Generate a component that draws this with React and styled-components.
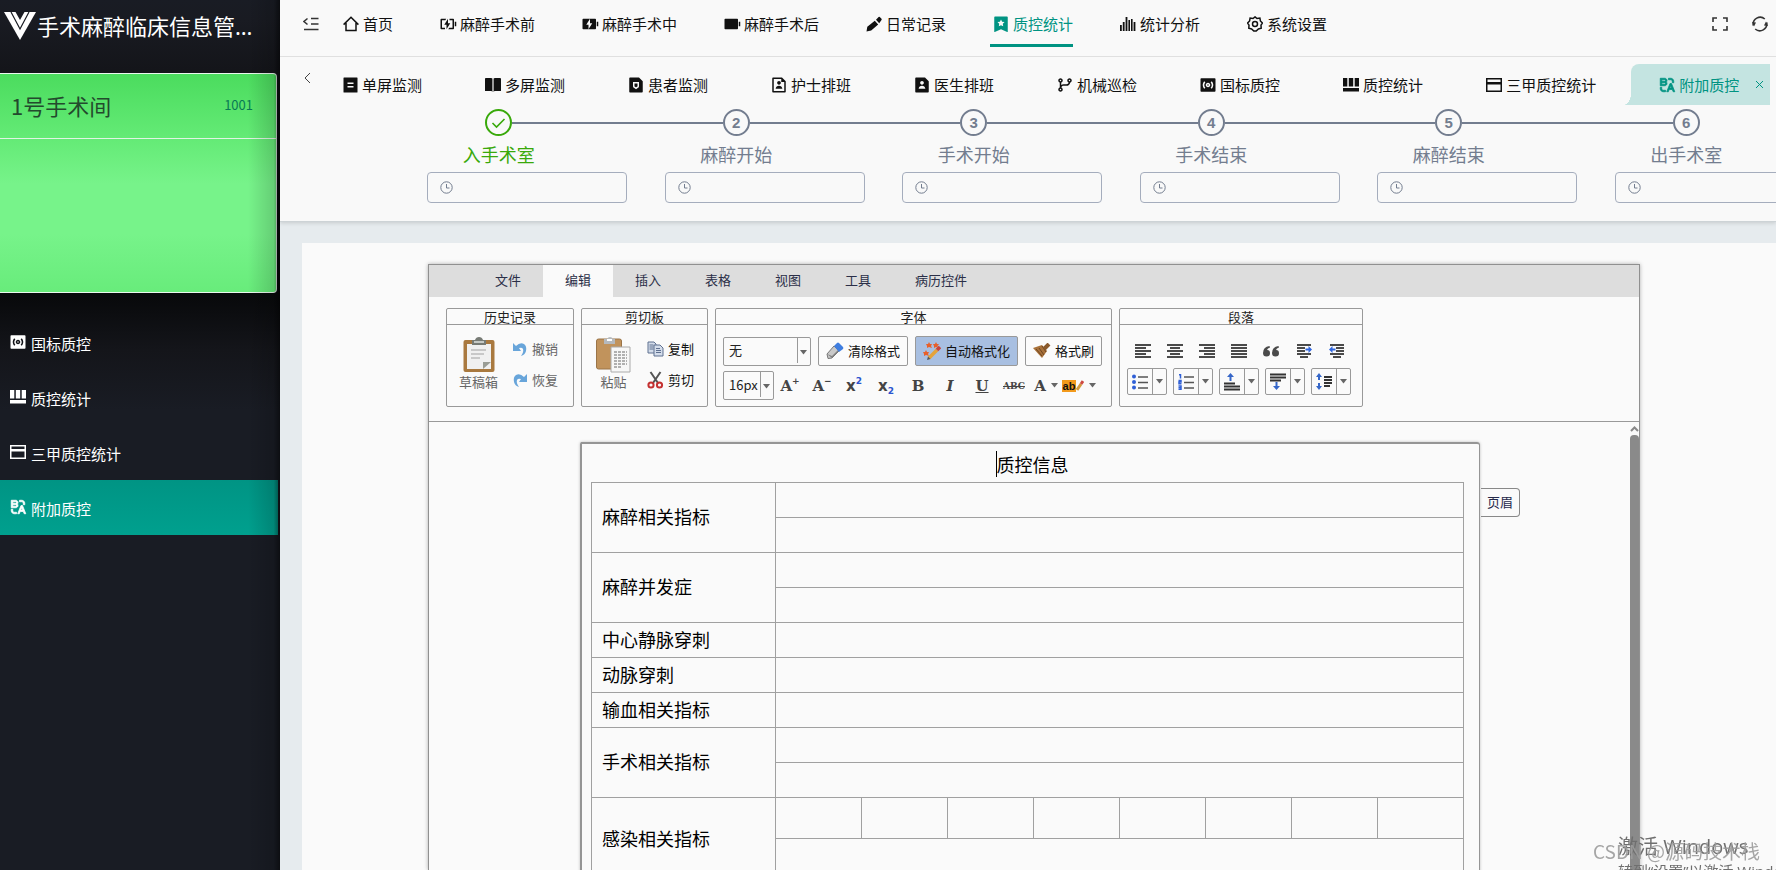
import React from 'react';
import styled, { createGlobalStyle } from 'styled-components';
import {
  RiAB,
  RiBatteryChargeFill,
  RiBatteryChargeLine,
  RiBatteryFill,
  RiBookmark3Fill,
  RiFileShieldFill,
  RiFileUserFill,
  RiFileUserLine,
  RiGitBranchLine,
  RiSurroundSoundFill
} from 'react-icons/ri';

const GlobalStyle = createGlobalStyle`
  * {
    box-sizing: border-box;
  }

  body {
    margin: 0;
    overflow: hidden;
    background: #f9f9f9;
    color: #111;
    font-family: "Noto Sans CJK SC", "Liberation Sans", sans-serif;
    font-size: 15px;
    line-height: 20px;
  }

  button, input, select {
    font: inherit;
    color: inherit;
  }

  button {
    background: none;
    border: 0;
    padding: 0;
    cursor: pointer;
    white-space: nowrap;
  }

  a {
    color: inherit;
    text-decoration: none;
    white-space: nowrap;
  }

  svg {
    display: block;
    flex: none;
  }
`;

const Layout = styled.div`
  display: flex;
  height: 100vh;
`;

const IconSlot = styled.span`
  display: flex;
  align-items: center;
  justify-content: center;
  flex: none;
  width: 16px;
  height: 18px;
`;

/* ---------- sidebar ---------- */

const Sidebar = styled.aside`
  position: relative;
  flex: 0 0 280px;
  min-width: 0;
  display: flex;
  flex-direction: column;
  padding-right: 2px;
  background: linear-gradient(#191c24 0, #191b22 20px, #14151a 70px, #08090b 295px, #14151a 350px, #191c24 410px);
  color: #fff;

  &::after {
    content: '';
    position: absolute;
    inset: 0 0 0 auto;
    width: 32px;
    background: linear-gradient(90deg, rgba(0, 0, 0, 0), rgba(0, 0, 0, 0.15) 80%, rgba(0, 0, 0, 0.5));
    pointer-events: none;
  }
`;

const Brand = styled.div`
  display: flex;
  align-items: center;
  gap: 1px;
  height: 54px;
  margin-bottom: 19px;
  padding: 0 16px 2px 4px;
`;

const BrandName = styled.h1`
  min-width: 0;
  margin: 0;
  overflow: hidden;
  font-family: "Noto Sans", "Noto Sans CJK SC", sans-serif;
  font-size: 22px;
  font-weight: 400;
  line-height: 32px;
  text-overflow: ellipsis;
  white-space: nowrap;
`;

const RoomCard = styled.section`
  height: 220px;
  margin-bottom: 22px;
  margin-right: 1px;
  border: 1px solid #e9f8ee;
  border-left: 0;
  border-radius: 0 4px 4px 0;
  background: linear-gradient(#4bdc5e, #63ea75 62px, #77f38a 110px, #77f38a 160px, #68ec7b);
`;

const RoomHeader = styled.div`
  display: flex;
  align-items: center;
  justify-content: space-between;
  height: 65px;
  padding: 0 23px 3px 11px;
  border-bottom: 1px solid #e0f3e4;
`;

const RoomName = styled.h2`
  margin: 0;
  color: #234a2d;
  font-size: 22px;
  font-weight: 400;
  line-height: 32px;
`;

const RoomCode = styled.span`
  color: #087a55;
  font-size: 13px;
`;

const SideLink = styled.a`
  display: flex;
  align-items: center;
  gap: 5px;
  height: 55px;
  padding: 2px 10px 0;
  background: ${props => (props.$active ? 'linear-gradient(#009484, #00a08e)' : 'none')};

  ${IconSlot} {
    margin-bottom: 4px;
  }
`;

/* ---------- header ---------- */

const Main = styled.main`
  flex: 1;
  min-width: 0;
  display: flex;
  flex-direction: column;
  background: #e6ebee;
`;

const Header = styled.header`
  position: relative;
  height: 222px;
  overflow: hidden;
  background: #f9f9f9;
  border-bottom: 1px solid #cdd3d6;
  box-shadow: 0 1px 4px rgba(0, 0, 0, 0.14);
`;

const TopBar = styled.div`
  display: flex;
  align-items: center;
  height: 57px;
  padding: 0 8px 9px 23px;
  border-bottom: 1px solid #e0e0e0;
`;

const IconButton = styled.button`
  display: flex;
  align-items: center;
  justify-content: center;
  color: ${props => (props.$plain ? 'inherit' : '#333')};
`;

const TopNav = styled.nav`
  display: flex;
  flex: 1;
  gap: 47px;
  padding-left: 24px;
`;

const TopLink = styled.a`
  position: relative;
  display: flex;
  align-items: center;
  gap: 4px;
  color: ${props => (props.$active ? '#009382' : '#111')};

  &::after {
    content: '';
    display: ${props => (props.$active ? 'block' : 'none')};
    position: absolute;
    inset: auto 0 -13px -3px;
    height: 3px;
    background: #009382;
  }
`;

const Tools = styled.div`
  display: flex;
  gap: 24px;
`;

const TabBar = styled.nav`
  display: flex;
  align-items: center;
  height: 41px;
  margin-top: 7px;
  padding-left: 24px;
  white-space: nowrap;
`;

const ScrollLeft = styled(IconButton)`
  width: 7px;
  margin: 0 31px 14px 0;
`;

const TabLink = styled.a`
  display: flex;
  align-items: center;
  gap: 4px;
  margin-right: 63px;
`;

const ActiveTab = styled.div`
  position: relative;
  display: flex;
  align-items: center;
  height: 41px;
  margin-left: -28px;
  padding-left: 28px;
  padding-right: 6px;
  border-radius: 8px 0 0 0;
  background: #c4e4e1;
  color: #009382;

  ${TabLink} {
    margin-right: 16px;
  }

  &::before {
    content: '';
    position: absolute;
    left: -8px;
    bottom: 0;
    width: 8px;
    height: 12px;
    background: radial-gradient(ellipse at 0 0, transparent 70%, #c4e4e1 72%);
  }
`;

const Steps = styled.ol`
  display: grid;
  grid-template-columns: repeat(6, 1fr);
  width: calc(100% - 71px);
  margin: 4px 0 0 100px;
  padding: 0;
  list-style: none;
`;

const Step = styled.li`
  display: flex;
  flex-direction: column;
  align-items: center;
  color: ${props => (props.$done ? '#39a90b' : '#737d8f')};
`;

const StepTrack = styled.div`
  display: flex;
  align-items: center;
  align-self: stretch;

  &::before,
  &::after {
    content: '';
    flex: 1;
    height: 2px;
    background: #737d8f;
  }

  ${Step}:first-child &::before,
  ${Step}:last-child &::after {
    background: none;
  }
`;

const StepCircle = styled.span`
  display: flex;
  align-items: center;
  justify-content: center;
  width: 27px;
  height: 27px;
  border: 2px solid currentColor;
  border-radius: 50%;
  font: bold 15px/20px "Liberation Sans", sans-serif;
`;

const StepLabel = styled.label`
  margin: 5px 0;
  font-size: 18px;
  line-height: 26px;
`;

const TimeField = styled.div`
  display: flex;
  align-items: center;
  align-self: flex-start;
  gap: 8px;
  width: 200px;
  height: 31px;
  margin-left: 47px;
  margin-right: -10px;
  padding: 0 12px;
  border: 1px solid #a5adbd;
  border-radius: 4px;
  color: #737d8f;

  input {
    flex: 1;
    min-width: 0;
    border: 0;
    outline: 0;
    background: none;
  }
`;

/* ---------- editor ---------- */

const Content = styled.div`
  flex: 1;
  min-height: 0;
  margin: 21px 0 0 22px;
  padding: 21px 136px 0 126px;
  background: #fafafa;
`;

const Editor = styled.section`
  display: flex;
  flex-direction: column;
  height: 100%;
  border: 1px solid #909090;
  border-bottom: 0;
  box-shadow: 0 0 4px rgba(0, 0, 0, 0.3);
  color: #222;
  font-size: 13px;
`;

const RibbonTabs = styled.div`
  display: flex;
  padding-left: 44px;
  background: #ddd;
`;

const RibbonTab = styled.button`
  height: 32px;
  padding: 0 22px 2px;
  background: ${props => (props.$active ? '#fafafa' : 'none')};
  color: #2b2f48;
`;

const Ribbon = styled.div`
  display: flex;
  gap: 7px;
  padding: 11px 17px 14px;
  border-bottom: 1px solid #999;
`;

const GroupBox = styled.fieldset`
  flex: 0 0 ${props => props.$width}px;
  height: 99px;
  min-width: 0;
  margin: 0;
  padding: 0;
  border: 1px solid #999;
  border-radius: 2px;
`;

const GroupTitle = styled.div`
  height: 16px;
  border-bottom: 1px solid #999;
  line-height: 15px;
  text-align: center;
`;

const GroupBody = styled.div`
  display: flex;
  gap: ${props => props.$gap}px;
  padding: 12px ${props => props.$side}px 0;
`;

const BigButton = styled.button`
  display: flex;
  flex-direction: column;
  align-items: center;
  color: #666;
  line-height: 18px;
`;

const ButtonStack = styled.div`
  display: flex;
  flex-direction: column;
  gap: 11px;
  padding-top: 2px;
`;

const SmallButton = styled.button`
  display: flex;
  align-items: center;
  gap: 4px;
  color: ${props => (props.$dark ? '#111' : '#666')};
`;

const ToolRows = styled.div`
  display: flex;
  flex-direction: column;
  gap: 5px;
  padding: ${props => props.$top}px 7px 0;
`;

const ToolRow = styled.div`
  display: flex;
  align-items: center;
  gap: ${props => props.$gap || 0}px;
`;

const SelectBox = styled.label`
  position: relative;
  display: block;
  width: ${props => props.$width}px;
  height: 29px;
  border: 1px solid #999;
  border-radius: 2px;

  select {
    width: 100%;
    height: 100%;
    padding: 0 0 2px 5px;
    border: 0;
    outline: 0;
    background: none;
    appearance: none;
  }

  svg {
    position: absolute;
    right: 3px;
    top: 12px;
    pointer-events: none;
  }

  &::after {
    content: '';
    position: absolute;
    inset: 0 12px 2px auto;
    width: 1px;
    background: #999;
  }
`;

const FormatButton = styled.button`
  display: flex;
  align-items: center;
  justify-content: center;
  gap: 4px;
  width: ${props => props.$width}px;
  height: 30px;
  border: 1px solid #999;
  border-radius: 2px;
  background: ${props => (props.$active ? '#a8bfe1' : '#fbfbfb')};
  color: #111;
`;

const Glyph = styled.button`
  display: flex;
  align-items: center;
  justify-content: center;
  gap: 5px;
  width: ${props => props.$width || 32}px;
  height: 24px;
  color: #444;
  font: bold 15px/20px "DejaVu Serif", serif;
`;

const ScriptGlyph = styled(Glyph)`
  gap: 0;
  font-family: ${props => (props.$blue ? '"DejaVu Sans", sans-serif' : '"DejaVu Serif", serif')};

  sup, sub {
    font: bold 9px/10px "DejaVu Sans", sans-serif;
    color: ${props => (props.$blue ? '#2a55cf' : '#444')};
  }

  sup {
    align-self: flex-start;
    padding-top: 2px;
  }

  sub {
    align-self: flex-end;
    padding-bottom: 2px;
  }
`;

const Struck = styled.s`
  font-size: 9px;
`;

const Highlight = styled.span`
  padding: 0 1px;
  background: #f29a1c;
  color: #111;
  font: bold 11px/12px "Liberation Sans", sans-serif;
`;

const SplitButton = styled.button`
  display: flex;
  align-items: center;
  width: 40px;
  height: 27px;
  border: 1px solid #999;
  border-radius: 2px;

  > svg:first-child {
    margin: 0 4px;
  }
`;

const SplitCaret = styled.span`
  display: flex;
  flex: 1;
  align-items: center;
  justify-content: center;
  align-self: stretch;
  border-left: 1px solid #999;
`;

const DocumentArea = styled.div`
  position: relative;
  flex: 1;
  min-height: 0;
  overflow: hidden;
  padding: 20px 159px 0 151px;
`;

const PageRow = styled.div`
  display: flex;
  align-items: flex-start;
  margin-right: -40px;
`;

const Page = styled.article`
  flex: 1;
  padding: 7px 15px 0 9px;
  border: solid #959595;
  border-width: 2px 1px 0 2px;
  border-radius: 2px 3px 0 0;
  box-shadow: 0 0 3px rgba(0, 0, 0, 0.25);
  color: #000;
  font-size: 18px;
`;

const PageTitle = styled.h2`
  width: max-content;
  margin: 0 0 5px calc(50% - 32px);
  border-left: 1px solid #000;
  font-size: 18px;
  font-weight: 400;
  line-height: 26px;
`;

const HeaderTag = styled.button`
  width: 39px;
  height: 29px;
  margin: 46px 0 0 1px;
  padding-bottom: 2px;
  border: 1px solid #888;
  border-left: 0;
  border-radius: 0 4px 4px 0;
  color: #25294a;
`;

const Scrollbar = styled.div`
  position: absolute;
  inset: 4px 0 0 auto;
  width: 9px;
  color: #888;

  &::after {
    content: '';
    position: absolute;
    inset: 9px 0 0;
    border-radius: 4px 4px 0 0;
    background: #8a8a8a;
  }
`;

const DataTable = styled.table`
  width: 100%;
  border-collapse: collapse;
  table-layout: fixed;

  th, td {
    height: 35px;
    padding: 0;
    border: 1px solid #a0a0a0;
  }

  th {
    padding: 0 0 3px 10px;
    font-weight: 400;
    line-height: 26px;
    text-align: left;
  }
`;

const LabelColumn = styled.col`
  width: 21.1%;
`;

const CellRow = styled.tr`
  && td {
    height: ${props => props.$height}px;
  }
`;

const Watermark = styled.div`
  position: fixed;
  color: rgba(155, 155, 155, 0.9);
  font-size: 19px;
  line-height: 26px;
  white-space: nowrap;
  pointer-events: none;
  right: 16px;
  bottom: 6px;
`;

const Activation = styled(Watermark)`
  right: auto;
  bottom: -12px;
  left: calc(100% - 158px);
  color: #6f6f6f;
  font-family: "Open Sans", "Noto Sans CJK SC", sans-serif;
  font-size: 15px;
  line-height: 22px;

  strong {
    display: block;
    font-size: 20px;
    font-weight: 400;
    line-height: 26px;
  }
`;

/* ---------- icons ---------- */

const HomeIcon = () => (
  <svg width="16" height="16" viewBox="0 0 16 16" fill="none" stroke="currentColor" strokeWidth="1.5">
    <path d="M.6 8.600L8 1.200l7.400 7.400M3 7v7.500h10V7" />
  </svg>
);

const PencilIcon = () => (
  <svg width="16" height="16" viewBox="0 0 16 16">
    <path fill="currentColor" d="M.5 15.500l.8-4.800 7.500-6 3.400 3.800-7 6zM10 3.700L12.600 1q.6-.5 1.200 0l1.700 1.700q.5.600 0 1.200l-2.300 3.300z" />
  </svg>
);

const GearIcon = () => (
  <svg width="16" height="16" viewBox="0 0 16 16" fill="none" stroke="currentColor" strokeWidth="1.500">
    <path d="M8 .9l2 1.600 2.900-.4.500 2.800 2 2.100-1.400 2.200.200 3-2.800.700L9.200 15H6.800l-2.200-2.100-2.800-.7.200-3L.6 7l2-2.100.5-2.800L6 2.500z" />
    <circle cx="8" cy="8" r="2.500" />
  </svg>
);

const SingleScreenIcon = () => (
  <svg width="15" height="16" viewBox="0 0 15 16">
    <path fill="currentColor" fillRule="evenodd" d="M1 .5h13q.5 0 .5.500v14q0 .5-.5.500H1q-.5 0-.5-.5V1q0-.5.500-.5zm3.500 5V7h6V5.500zm0 3.500v1.500h6V9z" />
  </svg>
);

const MultiScreenIcon = () => (
  <svg width="16" height="16" viewBox="0 0 16 16">
    <path fill="currentColor" d="M0 1.500Q0 1 1 1h5q1 0 1.400.6V15L6.500 14H0zM8.600 1.600Q9 1 10 1h5q1 0 1 1v12H9.500l-.9 1z" />
  </svg>
);

const ColumnsIcon = () => (
  <svg width="16" height="16" viewBox="0 0 16 16">
    <path fill="currentColor" d="M0 1h4.300v8.500H0zM5.800 1h4.400v8.500H5.800zM11.700 1H16v8.500h-4.300zM0 11h16v3.500H0z" />
  </svg>
);

const WindowIcon = () => (
  <svg width="16" height="16" viewBox="0 0 16 16">
    <path fill="currentColor" fillRule="evenodd" d="M0 1h16v14H0zm1.500 1.500v2.500h13V2.500zm0 5v6h13v-6z" />
  </svg>
);

const BarsIcon = () => (
  <svg width="16" height="16" viewBox="0 0 16 16">
    <path fill="currentColor" d="M0 9h1.800v6H0zM2.800 6h1.800v9H2.800zM5.600 1h1.800v14H5.600zM8.400 4h1.600v11H8.400zM11 3h1.600v12H11zM13.600 6h1.800v9h-1.800z" />
  </svg>
);

const ExchangeIcon = () => <RiAB size={18} strokeWidth="1" />;

const CollapseIcon = () => (
  <svg width="16" height="14" viewBox="0 0 16 14" fill="none" stroke="#333" strokeWidth="1.500">
    <path d="M8 1.500h7.500M8 7h7.500M1 12.500h14.500M4.500 1.500L1 4.500l3.500 3" />
  </svg>
);

const FullscreenIcon = () => (
  <svg width="16" height="16" viewBox="0 0 16 16" fill="none" stroke="currentColor" strokeWidth="1.600">
    <path d="M1 6V2h4M11 2h4v4M15 10v4h-4M5 14H1v-4" />
  </svg>
);

const RefreshIcon = () => (
  <svg width="16" height="16" viewBox="0 0 16 16" fill="none" stroke="currentColor" strokeWidth="1.600">
    <path d="M12.800 3A7 7 0 0 0 1.300 9.500M3.200 13A7 7 0 0 0 14.700 6.500" />
    <path fill="currentColor" stroke="none" d="M0 6l4 .5-2 4zM16 10l-4-.5 2-4z" />
  </svg>
);

const ChevronLeftIcon = () => (
  <svg width="7" height="12" viewBox="0 0 7 12" fill="none" stroke="#444">
    <path d="M6 1L1 6l5 5" />
  </svg>
);

const ClockIcon = () => (
  <svg width="13" height="13" viewBox="0 0 13 13" fill="none" stroke="currentColor">
    <circle cx="6.500" cy="6.500" r="5.700" />
    <path d="M6.500 3v4h3" />
  </svg>
);

const CheckIcon = () => (
  <svg width="15" height="12" viewBox="0 0 15 12" fill="none" stroke="currentColor" strokeWidth="1.600">
    <path d="M1.500 6l4 4L13.500 2" />
  </svg>
);

const CloseIcon = () => (
  <svg width="9" height="9" viewBox="0 0 9 9" stroke="currentColor">
    <path d="M1 1l7 7M8 1L1 8" />
  </svg>
);

const LogoIcon = () => (
  <svg width="32" height="28" viewBox="0 0 32 28">
    <path fill="#fff" d="M0 0h32L16 28z" />
    <path fill="none" stroke="#191b22" strokeWidth="1.200" d="M7 0l9 17L25 0" />
    <path fill="#191b22" d="M11.500 0L16 8 20.500 0z" />
  </svg>
);

const Caret = () => (
  <svg width="7" height="5" viewBox="0 0 7 5">
    <path fill="#666" d="M0 0h7L3.500 4.500z" />
  </svg>
);

const DraftIcon = () => (
  <svg width="32" height="36" viewBox="0 0 32 36">
    <rect x="0.500" y="3" width="31" height="32" rx="2" fill="#a9793f" />
    <path fill="#f0f0f0" d="M4 7h24v25H4z" />
    <path fill="#9a9d95" d="M20 32v-7h8z" />
    <path fill="#777b75" d="M9 3h3q1-3 4-3t4 3h3v5H9z" />
    <path fill="#c5c9c5" d="M11 4h10v2H11z" />
    <path stroke="#bbb" strokeWidth="1.500" d="M8 13h15M8 17h13M8 21h9" />
  </svg>
);

const PasteIcon = () => (
  <svg width="35" height="36" viewBox="0 0 35 36">
    <rect x="0.500" y="2" width="25" height="30" rx="2" fill="#c1935c" stroke="#9a7448" />
    <path fill="#b5b9bd" d="M8 2h3q1-2 3-2t3 2h2v5H8z" />
    <path fill="#fff" d="M11 2h5v2h-5z" />
    <path fill="#f7f7f7" stroke="#aaa" d="M15 10h19v25H15z" />
    <path stroke="#999" strokeWidth="1.500" strokeDasharray="3 1" d="M18 15h13M18 18h13M18 21h13M18 24h13M18 27h13M18 30h8" />
  </svg>
);

const UndoIcon = () => (
  <svg width="16" height="16" viewBox="0 0 16 16">
    <path fill="#68a5da" d="M1 2l3 3q4-4 8-2 3 2 2 7-1 4-5 5 3-4 2-7-1-2-4-1l2 3H1z" />
  </svg>
);

const RedoIcon = () => (
  <svg width="16" height="16" viewBox="0 0 16 16">
    <path fill="#68a5da" d="M15 2l-3 3Q8 1 4 3 1 5 2 10q1 4 5 5-3-4-2-7 1-2 4-1L7 10h8z" />
  </svg>
);

const CopyIcon = () => (
  <svg width="17" height="16" viewBox="0 0 17 16" stroke="#5f7090">
    <path fill="#d3dcea" d="M1 1h6l2 2v9H1z" />
    <path d="M2.500 4h4M2.500 6h4M2.500 8h4" />
    <path fill="#d3dcea" d="M7 4h6l3 3v8H7z" />
    <path d="M9 7.500h4M9 9.500h5M9 11.500h5" />
  </svg>
);

const CutIcon = () => (
  <svg width="17" height="18" viewBox="0 0 17 18" fill="none">
    <path stroke="#555" strokeWidth="2" d="M3.500 1L11 12M13.500 1L6 12" />
    <ellipse cx="4" cy="14" rx="2.600" ry="2.600" stroke="#c43131" strokeWidth="2" />
    <ellipse cx="12.500" cy="14" rx="2.600" ry="2.600" stroke="#c43131" strokeWidth="2" />
  </svg>
);

const EraserIcon = () => (
  <svg width="18" height="18" viewBox="0 0 18 18">
    <path fill="#c9c9c9" stroke="#777" d="M1 12L8 4l5 5-7 7-4 .5z" />
    <path fill="#808080" d="M1 12l5 4 7-7-1-1-6 6z" />
    <path fill="#3f7ee0" d="M8 4l3-3q1-.8 2 0l4 4q.7 1 0 2l-4 3z" />
  </svg>
);

const WandIcon = () => (
  <svg width="18" height="18" viewBox="0 0 18 18">
    <path fill="#e8602a" d="M6 0l1 2h2L8 4l1 2-3-1-2 1V4L3 2h2zM13 0l1 2h2l-1.500 2 .5 2-2-1-2 1V4L10 2h2zM3 8l1 2h2l-1 2 1 2-3-1-2 1v-2L0 10h2z" />
    <path stroke="#e5a33a" strokeWidth="3.500" d="M6 16l8-8" />
    <path stroke="#c9443c" strokeWidth="3.500" d="M14 8l3-3" />
    <path fill="#555" d="M4 18l1-3.500L7.500 17z" />
  </svg>
);

const BrushIcon = () => (
  <svg width="18" height="16" viewBox="0 0 18 16">
    <path fill="#a8713a" d="M0 5l9-3 5 6-5 7z" />
    <path stroke="#6e4520" d="M3 6l6 7M6 5l5 7M9 3l4 6" />
    <path stroke="#8a5a2c" strokeWidth="4" d="M11 6l5-5" />
  </svg>
);

const PencilTip = () => (
  <svg width="8" height="12" viewBox="0 0 8 12">
    <path stroke="#d29a3d" strokeWidth="3" d="M1 10l4-6" />
    <path stroke="#cf4a42" strokeWidth="3" d="M5 4l2-3" />
  </svg>
);

const alignLines = {
  left: 'M0 1h16M0 4h11M0 7h16M0 10h11M0 13h16',
  center: 'M0 1h16M3 4h10M0 7h16M3 10h10M0 13h16',
  right: 'M0 1h16M5 4h11M0 7h16M5 10h11M0 13h16',
  justify: 'M0 1h16M0 4h16M0 7h16M0 10h16M0 13h16'
};

const AlignIcon = ({ kind }) => (
  <svg width="16" height="14" viewBox="0 0 16 14" stroke="#4a4a4a" strokeWidth="2">
    <path d={alignLines[kind]} />
  </svg>
);

const IndentIcon = ({ back }) => (
  <svg width="16" height="14" viewBox="0 0 16 14">
    <g transform={back ? 'matrix(-1 0 0 1 16 0)' : undefined}>
      <path fill="#4a4a4a" d="M1 0h14v2H1zM1 3h8v2H1zM1 6h8v2H1zM1 9h14v2H1zM4 12h8v2H4z" />
      <path fill="#2f66e0" d="M9.500 4.500h3V2L16 5.500 12.500 9V6.500h-3z" />
    </g>
  </svg>
);

const QuoteIcon = () => (
  <svg width="17" height="11" viewBox="0 0 17 11" fill="#4a4a4a">
    <path d="M6.500 0Q0 1 0 7q0 3.500 3.500 3.500T7 7.200 4 4q.5-2 3-2.500zM15.500 0Q9 1 9 7q0 3.500 3.500 3.500T16 7.200 13 4q.5-2 3-2.500z" />
  </svg>
);

const ListIcon = ({ numbered }) => (
  <svg width="16" height="16" viewBox="0 0 16 16">
    {numbered ? (
      <path fill="none" stroke="#2f5fd6" strokeWidth="1.500" d="M1 .800h1.500V4.500M.5 6.500h2.500v1.500H1v1.800h2.500M.5 12h2.500v3.500H.5m0-1.800h2.500" />
    ) : (
      <g fill="#2f5fd6">
        <circle cx="2" cy="2.500" r="2" />
        <circle cx="2" cy="8" r="2" />
        <circle cx="2" cy="13.500" r="2" />
      </g>
    )}
    <path stroke="#555" strokeWidth="1.600" d="M6 3h10M6 8.500h10M6 14h10" />
  </svg>
);

const SpacingIcon = ({ kind }) => (
  <svg width="16" height="18" viewBox="0 0 16 18">
    {kind === 'before' && (
      <g>
        <path fill="#3566c8" d="M5.500 8V4H3l3.500-4L10 4H7.500v4z" />
        <path stroke="#333" strokeWidth="2" d="M0 10.500h11M0 13.500h16M0 16.500h16" />
      </g>
    )}
    {kind === 'after' && (
      <g>
        <path fill="#3566c8" d="M5.500 9v4H3l3.500 4 3.500-4H7.500V9z" />
        <path stroke="#333" strokeWidth="2" d="M0 1.500h16M0 4.500h16M0 7.500h11" />
      </g>
    )}
    {kind === 'line' && (
      <g>
        <path fill="#3566c8" d="M3 0l3 4H4v3H2V4H0zM3 17l3-4H4v-3H2v3H0z" />
        <path stroke="#333" strokeWidth="1.800" d="M8 4h8M8 7h8M8 10h8M8 13h6" />
      </g>
    )}
  </svg>
);

/* ---------- data ---------- */

const sideLinks = [
  { name: '国标质控', icon: RiSurroundSoundFill },
  { name: '质控统计', icon: ColumnsIcon },
  { name: '三甲质控统计', icon: WindowIcon },
  { name: '附加质控', icon: ExchangeIcon, active: true }
];

const topLinks = [
  { name: '首页', icon: HomeIcon },
  { name: '麻醉手术前', icon: RiBatteryChargeLine },
  { name: '麻醉手术中', icon: RiBatteryChargeFill },
  { name: '麻醉手术后', icon: RiBatteryFill },
  { name: '日常记录', icon: PencilIcon },
  { name: '质控统计', icon: RiBookmark3Fill, active: true },
  { name: '统计分析', icon: BarsIcon },
  { name: '系统设置', icon: GearIcon }
];

const tabs = [
  { name: '单屏监测', icon: SingleScreenIcon },
  { name: '多屏监测', icon: MultiScreenIcon },
  { name: '患者监测', icon: RiFileShieldFill },
  { name: '护士排班', icon: RiFileUserLine },
  { name: '医生排班', icon: RiFileUserFill },
  { name: '机械巡检', icon: RiGitBranchLine },
  { name: '国标质控', icon: RiSurroundSoundFill },
  { name: '质控统计', icon: ColumnsIcon },
  { name: '三甲质控统计', icon: WindowIcon }
];

const steps = ['入手术室', '麻醉开始', '手术开始', '手术结束', '麻醉结束', '出手术室'];

const ribbonTabs = ['文件', '编辑', '插入', '表格', '视图', '工具', '病历控件'];

const indicators = [
  { name: '麻醉相关指标', rows: 2 },
  { name: '麻醉并发症', rows: 2 },
  { name: '中心静脉穿刺', rows: 1 },
  { name: '动脉穿刺', rows: 1 },
  { name: '输血相关指标', rows: 1 },
  { name: '手术相关指标', rows: 2 }
];

/* ---------- parts ---------- */

const MenuIcon = ({ icon: Icon }) => (
  <IconSlot>
    <Icon size={18} />
  </IconSlot>
);

const Group = ({ title, width, children }) => (
  <GroupBox $width={width} aria-label={title}>
    <GroupTitle>{title}</GroupTitle>
    {children}
  </GroupBox>
);

const Split = ({ label, children }) => (
  <SplitButton aria-label={label}>
    {children}
    <SplitCaret>
      <Caret />
    </SplitCaret>
  </SplitButton>
);

const SideMenu = () => (
  <Sidebar>
    <Brand>
      <LogoIcon />
      <BrandName>手术麻醉临床信息管理系统</BrandName>
    </Brand>
    <RoomCard>
      <RoomHeader>
        <RoomName>1号手术间</RoomName>
        <RoomCode>1001</RoomCode>
      </RoomHeader>
    </RoomCard>
    <nav>
      {sideLinks.map(({ name, icon, active }) => (
        <SideLink href="#" key={name} $active={active}>
          <MenuIcon icon={icon} />
          {name}
        </SideLink>
      ))}
    </nav>
  </Sidebar>
);

const PageHeader = () => (
  <Header>
    <TopBar>
      <IconButton aria-label="收起菜单">
        <CollapseIcon />
      </IconButton>
      <TopNav>
        {topLinks.map(({ name, icon, active }) => (
          <TopLink href="#" key={name} $active={active}>
            <MenuIcon icon={icon} />
            {name}
          </TopLink>
        ))}
      </TopNav>
      <Tools>
        <IconButton aria-label="全屏">
          <FullscreenIcon />
        </IconButton>
        <IconButton aria-label="刷新">
          <RefreshIcon />
        </IconButton>
      </Tools>
    </TopBar>
    <TabBar>
      <ScrollLeft aria-label="向左">
        <ChevronLeftIcon />
      </ScrollLeft>
      {tabs.map(({ name, icon }) => (
        <TabLink href="#" key={name}>
          <MenuIcon icon={icon} />
          {name}
        </TabLink>
      ))}
      <ActiveTab>
        <TabLink href="#">
          <MenuIcon icon={ExchangeIcon} />
          附加质控
        </TabLink>
        <IconButton aria-label="关闭" $plain>
          <CloseIcon />
        </IconButton>
      </ActiveTab>
    </TabBar>
    <Steps>
      {steps.map((name, i) => (
        <Step key={name} $done={i === 0}>
          <StepTrack>
            <StepCircle>{i === 0 ? <CheckIcon /> : i + 1}</StepCircle>
          </StepTrack>
          <StepLabel htmlFor={`step-${i}`}>{name}</StepLabel>
          <TimeField>
            <ClockIcon />
            <input id={`step-${i}`} type="text" />
          </TimeField>
        </Step>
      ))}
    </Steps>
  </Header>
);

const EditorRibbon = () => (
  <Ribbon>
    <Group title="历史记录" width={128}>
      <GroupBody $side={12} $gap={14}>
        <BigButton>
          <DraftIcon />
          草稿箱
        </BigButton>
        <ButtonStack>
          <SmallButton>
            <UndoIcon />
            撤销
          </SmallButton>
          <SmallButton>
            <RedoIcon />
            恢复
          </SmallButton>
        </ButtonStack>
      </GroupBody>
    </Group>
    <Group title="剪切板" width={127}>
      <GroupBody $side={14} $gap={16}>
        <BigButton>
          <PasteIcon />
          粘贴
        </BigButton>
        <ButtonStack>
          <SmallButton $dark>
            <CopyIcon />
            复制
          </SmallButton>
          <SmallButton $dark>
            <CutIcon />
            剪切
          </SmallButton>
        </ButtonStack>
      </GroupBody>
    </Group>
    <Group title="字体" width={397}>
      <ToolRows $top={11}>
        <ToolRow $gap={7}>
          <SelectBox $width={88}>
            <select aria-label="字体">
              <option>无</option>
            </select>
            <Caret />
          </SelectBox>
          <FormatButton $width={90}>
            <EraserIcon />
            清除格式
          </FormatButton>
          <FormatButton $width={103} $active>
            <WandIcon />
            自动格式化
          </FormatButton>
          <FormatButton $width={77}>
            <BrushIcon />
            格式刷
          </FormatButton>
        </ToolRow>
        <ToolRow>
          <SelectBox $width={51}>
            <select aria-label="字号">
              <option>16px</option>
            </select>
            <Caret />
          </SelectBox>
          <ScriptGlyph aria-label="增大字号">
            A<sup>+</sup>
          </ScriptGlyph>
          <ScriptGlyph aria-label="减小字号">
            A<sup>−</sup>
          </ScriptGlyph>
          <ScriptGlyph aria-label="上标" $blue>
            x<sup>2</sup>
          </ScriptGlyph>
          <ScriptGlyph aria-label="下标" $blue>
            x<sub>2</sub>
          </ScriptGlyph>
          <Glyph aria-label="加粗">B</Glyph>
          <Glyph aria-label="斜体">
            <i>I</i>
          </Glyph>
          <Glyph aria-label="下划线">
            <u>U</u>
          </Glyph>
          <Glyph aria-label="删除线">
            <Struck>ABC</Struck>
          </Glyph>
          <Glyph aria-label="字体颜色">
            A
            <Caret />
          </Glyph>
          <Glyph aria-label="突出显示" $width={34}>
            <ToolRow>
              <Highlight>ab</Highlight>
              <PencilTip />
            </ToolRow>
            <Caret />
          </Glyph>
        </ToolRow>
      </ToolRows>
    </Group>
    <Group title="段落" width={244}>
      <ToolRows $top={14}>
        <ToolRow>
          <Glyph aria-label="左对齐">
            <AlignIcon kind="left" />
          </Glyph>
          <Glyph aria-label="居中">
            <AlignIcon kind="center" />
          </Glyph>
          <Glyph aria-label="右对齐">
            <AlignIcon kind="right" />
          </Glyph>
          <Glyph aria-label="两端对齐">
            <AlignIcon kind="justify" />
          </Glyph>
          <Glyph aria-label="引用">
            <QuoteIcon />
          </Glyph>
          <Glyph aria-label="增加缩进" $width={34}>
            <IndentIcon />
          </Glyph>
          <Glyph aria-label="减少缩进">
            <IndentIcon back />
          </Glyph>
        </ToolRow>
        <ToolRow $gap={6}>
          <Split label="项目符号">
            <ListIcon />
          </Split>
          <Split label="编号">
            <ListIcon numbered />
          </Split>
          <Split label="段前距">
            <SpacingIcon kind="before" />
          </Split>
          <Split label="段后距">
            <SpacingIcon kind="after" />
          </Split>
          <Split label="行距">
            <SpacingIcon kind="line" />
          </Split>
        </ToolRow>
      </ToolRows>
    </Group>
  </Ribbon>
);

const QualityTable = () => (
  <DataTable>
    <colgroup>
      <LabelColumn />
      {Array.from({ length: 8 }, (_, i) => (
        <col key={i} />
      ))}
    </colgroup>
    <tbody>
      {indicators.map(({ name, rows }) => (
        <React.Fragment key={name}>
          <tr>
            <th scope="row" rowSpan={rows}>
              {name}
            </th>
            <td colSpan={8} />
          </tr>
          {rows > 1 && (
            <tr>
              <td colSpan={8} />
            </tr>
          )}
        </React.Fragment>
      ))}
      <CellRow $height={41}>
        <th scope="row" rowSpan={2}>
          感染相关指标
        </th>
        {Array.from({ length: 8 }, (_, i) => (
          <td key={i} />
        ))}
      </CellRow>
      <CellRow $height={43}>
        <td colSpan={8} />
      </CellRow>
    </tbody>
  </DataTable>
);

const App = () => (
  <Layout>
    <GlobalStyle />
    <SideMenu />
    <Main>
      <PageHeader />
      <Content>
        <Editor>
          <RibbonTabs>
            {ribbonTabs.map(name => (
              <RibbonTab key={name} $active={name === '编辑'}>
                {name}
              </RibbonTab>
            ))}
          </RibbonTabs>
          <EditorRibbon />
          <DocumentArea>
            <PageRow>
              <Page>
                <PageTitle>质控信息</PageTitle>
                <QualityTable />
              </Page>
              <HeaderTag>页眉</HeaderTag>
            </PageRow>
            <Scrollbar>
              <svg width="9" height="6" viewBox="0 0 9 6" fill="none" stroke="currentColor" strokeWidth="2">
                <path d="M1 5l3.500-3.500L8 5" />
              </svg>
            </Scrollbar>
          </DocumentArea>
        </Editor>
      </Content>
    </Main>
    <Activation>
      <strong>激活 Windows</strong>
      转到“设置”以激活 Windows。
    </Activation>
    <Watermark>CSDN @源码技术栈</Watermark>
  </Layout>
);

export default App;
